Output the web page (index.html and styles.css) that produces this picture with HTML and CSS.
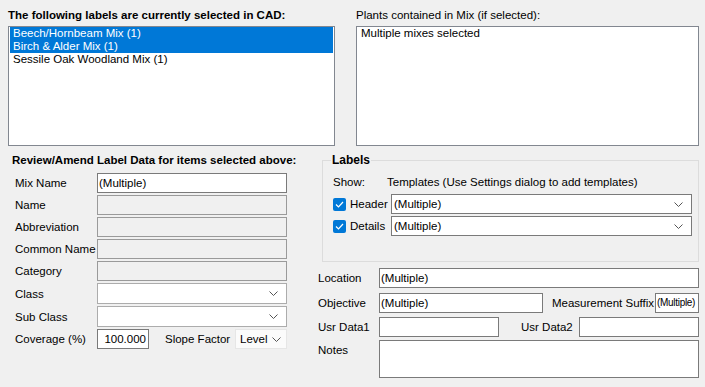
FILE: index.html
```html
<!DOCTYPE html>
<html lang="en">
<head>
<meta charset="UTF-8">
<title>Label Data</title>
<link rel="stylesheet" href="styles.css">
</head>
<body>
<div class="page">
  <div class="top">
    <div class="col col-left">
      <div class="caption bold">The following labels are currently selected in CAD:</div>
      <div class="listbox">
        <div class="item selected">Beech/Hornbeam Mix (1)</div>
        <div class="item selected">Birch &amp; Alder Mix (1)</div>
        <div class="item">Sessile Oak Woodland Mix (1)</div>
      </div>
    </div>
    <div class="col col-right">
      <div class="caption">Plants contained in Mix (if selected):</div>
      <div class="listbox">
        <div class="item">Multiple mixes selected</div>
      </div>
    </div>
  </div>

  <div class="bottom">
    <div class="form-left">
      <div class="caption2 bold">Review/Amend Label Data for items selected above:</div>
      <div class="rows">
        <div class="row"><span class="lbl">Mix Name</span><div class="tb">(Multiple)</div></div>
        <div class="row"><span class="lbl">Name</span><div class="tb disabled"></div></div>
        <div class="row"><span class="lbl">Abbreviation</span><div class="tb disabled"></div></div>
        <div class="row"><span class="lbl">Common Name</span><div class="tb disabled"></div></div>
        <div class="row"><span class="lbl">Category</span><div class="tb disabled"></div></div>
        <div class="row row-combo"><span class="lbl">Class</span><div class="combo"><span></span><svg class="chev" width="9" height="5" viewBox="0 0 9 5"><polyline points="0.5,0.5 4.5,4.5 8.5,0.5" /></svg></div></div>
        <div class="row row-combo"><span class="lbl">Sub Class</span><div class="combo"><span></span><svg class="chev" width="9" height="5" viewBox="0 0 9 5"><polyline points="0.5,0.5 4.5,4.5 8.5,0.5" /></svg></div></div>
        <div class="row">
          <span class="lbl">Coverage (%)</span>
          <div class="tb num">100.000</div>
          <span class="slope-lbl">Slope Factor</span>
          <div class="combo flat"><span>Level</span><svg class="chev" width="9" height="5" viewBox="0 0 9 5"><polyline points="0.5,0.5 4.5,4.5 8.5,0.5" /></svg></div>
        </div>
      </div>
    </div>

    <div class="form-right">
      <fieldset class="group">
        <legend class="bold">Labels</legend>
        <div class="show-row"><span class="show-lbl">Show:</span><span>Templates (Use Settings dialog to add templates)</span></div>
        <div class="tpl-row">
          <label class="check"><span class="box"><svg width="9" height="7" viewBox="0 0 9 7"><polyline points="1,3.5 3.5,6 8,1" /></svg></span>Header</label>
          <div class="combo wide"><span>(Multiple)</span><svg class="chev" width="9" height="5" viewBox="0 0 9 5"><polyline points="0.5,0.5 4.5,4.5 8.5,0.5" /></svg></div>
        </div>
        <div class="tpl-row">
          <label class="check"><span class="box"><svg width="9" height="7" viewBox="0 0 9 7"><polyline points="1,3.5 3.5,6 8,1" /></svg></span>Details</label>
          <div class="combo wide"><span>(Multiple)</span><svg class="chev" width="9" height="5" viewBox="0 0 9 5"><polyline points="0.5,0.5 4.5,4.5 8.5,0.5" /></svg></div>
        </div>
      </fieldset>

      <div class="rrow r-loc"><span class="rlbl">Location</span><div class="tb grow">(Multiple)</div></div>
      <div class="rrow r-obj">
        <span class="rlbl">Objective</span><div class="tb w-obj">(Multiple)</div>
        <span class="mid-lbl ms">Measurement Suffix</span><div class="tb w-suf">(Multiple)</div>
      </div>
      <div class="rrow r-usr">
        <span class="rlbl">Usr Data1</span><div class="tb w-usr"></div>
        <span class="mid-lbl u2">Usr Data2</span><div class="tb w-usr"></div>
      </div>
      <div class="rrow r-notes"><span class="rlbl top">Notes</span><div class="tb grow notes"></div></div>
    </div>
  </div>
</div>
</body>
</html>
```

FILE: styles.css
```css
body { margin: 0; background: #f0f0f0; font-family: "Liberation Sans", Arial, sans-serif; font-size: 11.5px; color: #000; }
.page { width: 705px; height: 387px; padding: 6px 6px 0 8px; box-sizing: border-box; overflow: hidden; }
.bold { font-weight: bold; }

/* top lists */
.top { display: flex; gap: 21px; }
.col-left { width: 327px; }
.col-right { width: 343px; }
.caption { height: 18px; line-height: 18px; margin-bottom: 2px; white-space: nowrap; }
.listbox { height: 120px; background: #fff; border: 1px solid #828790; box-sizing: border-box; padding: 0 1px; }
.item { height: 13px; line-height: 13px; padding-left: 3px; white-space: nowrap; }
.item.selected { background: #0078d7; color: #fff; }

/* bottom */
.bottom { display: flex; }
.form-left { width: 306px; padding-left: 4px; }
.caption2 { margin-top: 6px; height: 16px; line-height: 16px; white-space: nowrap; }
.rows { margin-top: 5px; display: flex; flex-direction: column; gap: 2px; }
.row { display: flex; align-items: center; height: 20px; }
.row-combo { height: 21px; }
.lbl { width: 85px; padding-left: 3px; box-sizing: border-box; white-space: nowrap; }

.tb { height: 20px; width: 190px; box-sizing: border-box; border: 1px solid #7a7a7a; background: #fff; line-height: 18px; padding-left: 1px; white-space: nowrap; overflow: hidden; }
.tb.disabled { background: #f0f0f0; border-color: #9a9a9a; }
.tb.num { width: 52px; text-align: right; padding: 0 2px 0 0; }
.slope-lbl { margin-left: 16px; width: 70px; white-space: nowrap; }

.combo { height: 21px; width: 190px; box-sizing: border-box; border: 1px solid #acacac; background: #fff; display: flex; align-items: center; justify-content: space-between; padding: 0 8px 0 3px; }
.combo.flat { width: 52px; height: 20px; border-color: #e6e6e6; background: #fbfbfb; padding: 0 5px 0 4px; }
.combo.wide { width: 301px; height: 20px; border-color: #7a7a7a; padding-left: 2px; }
.chev { fill: none; stroke: #555; stroke-width: 1; }

.form-right { width: 381px; }
.group { margin: 7px 0 0 4px; width: 377px; box-sizing: border-box; border: 1px solid #dcdcdc; padding: 0 5px 25px 10px; }
.group legend { padding: 0 1px; margin-left: -2px; line-height: 14px; font-size: 12px; }
.show-row { display: flex; margin-top: 7px; height: 16px; line-height: 16px; }
.show-lbl { width: 54px; }
.tpl-row { display: flex; align-items: center; margin-top: 2px; }
.show-row + .tpl-row { margin-top: 4px; }
.check { width: 58px; display: flex; align-items: center; gap: 4px; }
.box { width: 13px; height: 13px; background: #0078d7; border-radius: 2px; display: flex; align-items: center; justify-content: center; }
.box svg { fill: none; stroke: #fff; stroke-width: 1.2; }

.rrow { display: flex; align-items: center; }
.r-loc { margin-top: 6px; }
.r-obj { margin-top: 5px; }
.r-usr { margin-top: 4px; }
.r-notes { margin-top: 3px; align-items: flex-start; }
.rlbl { width: 61px; white-space: nowrap; }
.rlbl.top { padding-top: 4px; }
.grow { width: 320px; }
.w-obj { width: 164px; }
.w-suf { width: 44px; font-size: 10px; letter-spacing: -0.3px; padding-left: 1px; }
.w-usr { width: 120px; }
.mid-lbl { white-space: nowrap; }
.ms { margin-left: 9px; width: 103px; }
.u2 { margin-left: 22px; width: 58px; }
.notes { height: 38px; }
```
